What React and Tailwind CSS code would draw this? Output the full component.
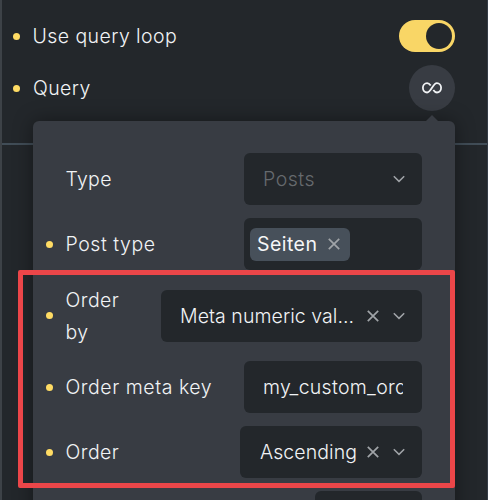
import React, { useState } from 'react';

const Chevron = () => (
  <svg width="12" height="8" viewBox="0 0 12 8" fill="none" stroke="#a0a4a8" strokeWidth="1.5" className="shrink-0">
    <path d="M0.8 1.2L6 6.4L11.2 1.2" />
  </svg>
);

const Clear = () => (
  <svg width="12" height="12" viewBox="0 0 12 12" fill="none" stroke="#a0a4a8" strokeWidth="1.7" className="shrink-0">
    <path d="M0.8 0.8L11.2 11.2M11.2 0.8L0.8 11.2" />
  </svg>
);

const Infinity = () => (
  <svg width="22" height="14" viewBox="0 0 22 14" fill="none" stroke="#f1f3f5" strokeWidth="1.8">
    <path d="M9.7 4.6C8.6 3 7.6 2.1 6.1 2.1C3.7 2.1 1.9 4.2 1.9 6.8C1.9 9.4 3.7 11.5 6.1 11.5C8 11.5 9.2 9.8 11 6.8C12.8 3.8 14 2.1 15.9 2.1C18.3 2.1 20.1 4.2 20.1 6.8C20.1 9.4 18.3 11.5 15.9 11.5C14.4 11.5 13.4 10.6 12.3 9" />
  </svg>
);

const Row = ({ label, bullet = true, className, labelClass = 'tracking-[0.54px]', children }) => (
  <div className={`flex items-center ${className}`}>
    <div className="flex w-5 shrink-0 items-center">
      {bullet && <span className="h-[7px] w-[7px] rounded-full bg-[#ffdc64]" />}
    </div>
    <span className={`leading-8 font-[340] ${labelClass}`}>{label}</span>
    <div className="ml-auto flex shrink-0">{children}</div>
  </div>
);

const controlClass = 'flex h-[52px] items-center rounded-[6px] bg-[#23272b] leading-8 font-[360] tracking-[0.07px]';

export default function App() {
  const [enabled, setEnabled] = useState(true);
  const [metaKey, setMetaKey] = useState('my_custom_order');

  return (
    <div className="relative h-[500px] w-[488px] overflow-hidden border-r border-l-2 border-r-[#343c46] border-l-[#3d4247] bg-[#23272b] font-['Inter','Liberation_Sans',sans-serif] text-[19.5px] text-[#f1f3f5]">
      <div className="h-[145px] border-b-2 border-[#414d57] pt-[10px] pr-8 pl-[11px]">
        <Row label="Use query loop" className="h-[52px]" labelClass="-ml-[0.5px] tracking-[0.42px]">
          <button
            type="button"
            aria-pressed={enabled}
            onClick={() => setEnabled(!enabled)}
            className={`flex h-8 w-14 items-center rounded-full bg-[#f9d666] px-[3px] ${enabled ? 'justify-end' : ''}`}
          >
            <span className="h-[26px] w-[26px] rounded-full bg-[#23272b]" />
          </button>
        </Row>
        <Row label="Query" className="h-[52px]" labelClass="tracking-[0.4px]">
          <button type="button" className="flex h-[46px] w-[46px] items-center justify-center rounded-full bg-[#383c43]">
            <Infinity />
          </button>
        </Row>
      </div>

      <div className="absolute top-[121px] left-[31px] w-[422px] rounded-t-[6px] bg-[#383c43] pt-[32px] pr-[33px] pb-8 pl-[12.5px] shadow-[0_0_20px_rgba(0,0,0,0.4)]">
        <svg width="14" height="7" viewBox="0 0 14 7" className="absolute -top-[6px] right-4">
          <path d="M0 7L7 0L14 7Z" fill="#383c43" />
        </svg>
        <div className="flex flex-col gap-[13px]">
          <Row label="Type" bullet={false} className="h-[52px]" labelClass="tracking-[0.3px]">
            <div className={`${controlClass} w-[178px] justify-between pr-[17px] pl-[19px] text-[#666a6e]`}>
              <span className="font-[330] tracking-[0.5px]">Posts</span>
              <Chevron />
            </div>
          </Row>
          <Row label="Post type" className="h-[52px]">
            <div className={`${controlClass} w-[178px] px-[6px]`}>
              <span className="flex h-[33px] w-[100px] items-center justify-between rounded-[6px] bg-[#47505a] pr-[10px] pl-[7px] font-[430] tracking-[0.45px] text-[#f5f6f7]">
                Seiten
                <Clear />
              </span>
            </div>
          </Row>
          <Row label="Order by" className="h-[65px]" labelClass="w-[60px] tracking-[0.46px]">
            <div className={`${controlClass} w-[261px] pr-[17px] pl-[19px]`}>
              <span className="w-[174px] whitespace-nowrap">Meta numeric val...</span>
              <div className="ml-auto flex items-center gap-[14px]">
                <Clear />
                <Chevron />
              </div>
            </div>
          </Row>
          <Row label="Order meta key" className="h-[52px]">
            <div className={`${controlClass} w-[178px] px-[19px]`}>
              <input
                value={metaKey}
                onChange={(e) => setMetaKey(e.target.value)}
                className="h-full w-[140px] min-w-0 bg-transparent tracking-[0.3px] outline-none"
              />
            </div>
          </Row>
          <Row label="Order" className="h-[52px]" labelClass="tracking-[0.46px]">
            <div className={`${controlClass} w-[182px] pr-[17px] pl-5`}>
              <span>Ascending</span>
              <div className="ml-auto flex items-center gap-[14px]">
                <Clear />
                <Chevron />
              </div>
            </div>
          </Row>
          <Row label="" bullet={false} className="h-[52px]">
            <div className={`${controlClass} w-[107px]`} />
          </Row>
        </div>
      </div>

      <div className="pointer-events-none absolute top-[270px] left-[16px] h-[218px] w-[437px] rounded-[2px] border-[5px] border-[#eb4649]" />
    </div>
  );
}
